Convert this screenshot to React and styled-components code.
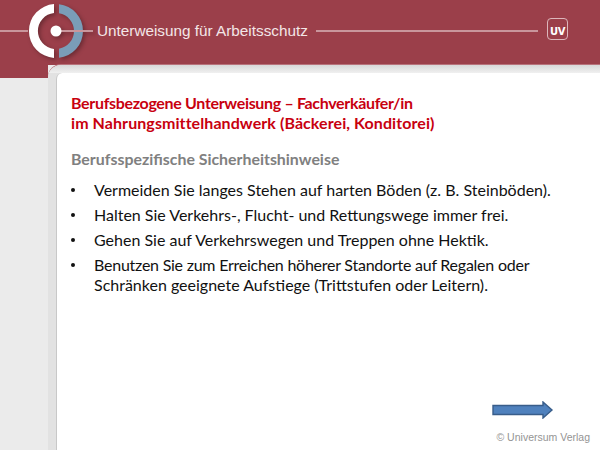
import React from 'react';
import styled, { createGlobalStyle } from 'styled-components';

const GlobalStyle = createGlobalStyle`
  html, body {
    margin: 0;
    padding: 0;
    width: 600px;
    height: 450px;
    overflow: hidden;
  }
`;

const Page = styled.div`
  width: 600px;
  height: 450px;
  display: flex;
  flex-direction: column;
  background: #ebebeb;
  font-family: Lato, "Open Sans", sans-serif;
`;

const Header = styled.header`
  height: 65px;
  flex: none;
  display: flex;
  align-items: flex-start;
  padding-top: 1px;
  box-sizing: border-box;
  background: #9b3f4a;
`;

const Rule = styled.div`
  height: 2px;
  margin-top: 29px;
  background: #c9969c;
  flex: ${props => props.$grow ? 1 : 'none'};
  width: ${props => props.$width || 'auto'};
`;

const HeaderTitle = styled.span`
  font-family: "Liberation Sans", Arial, sans-serif;
  font-size: 15.3px;
  line-height: 20px;
  margin: 20px 8px 0 4px;
  color: #f3e6e7;
  white-space: nowrap;
`;

const UvBadge = styled.div`
  width: 21px;
  height: 22px;
  margin: 17px 32px 0 9px;
  box-sizing: border-box;
  border: 1px solid #dcb6bb;
  border-radius: 4px;
  display: flex;
  align-items: flex-end;
  justify-content: center;
  font-family: "DejaVu Sans", "Liberation Sans", sans-serif;
  font-weight: 700;
  font-size: 10px;
  line-height: 14px;
  letter-spacing: -0.5px;
  color: #fff;
`;

const LogoSvg = styled.svg`
  flex: none;
  overflow: visible;
  filter: drop-shadow(2px 2px 2px rgba(0, 0, 0, 0.3));
`;

const Body = styled.div`
  flex: 1;
  display: flex;
  min-height: 0;
`;

const Sidebar = styled.div`
  width: 48px;
  flex: none;
`;

const SidebarCap = styled.div`
  height: 13px;
  background: #9b3f4a;
`;

const PanelFrame = styled.div`
  flex: 1;
  display: flex;
  box-sizing: border-box;
  padding: 8px 0 0 8px;
  background: linear-gradient(#d8d8d8, #f0f0f0 8px, #e2e2e2 8px);
  border-top-left-radius: 13px;
  box-shadow: 0 -1px 0 #b8727b;
`;

const Sheet = styled.main`
  flex: 1;
  position: relative;
  box-sizing: border-box;
  background: #fff;
  border-left: 1px solid #c8c8c8;
  border-top-left-radius: 6px;
  padding: 20px 14px 0 14px;
  color: #111;
`;

const Heading = styled.h1`
  margin: 0;
  font-size: 16px;
  line-height: 20px;
  font-weight: 700;
  color: #c8000f;
`;

const HeadingLine = styled.span`
  display: block;
  white-space: nowrap;
  letter-spacing: ${props => props.$spacing};
`;

const Subheading = styled.h2`
  margin: 16px 0 0;
  font-size: 15.9px;
  line-height: 20px;
  font-weight: 700;
  color: #808080;
`;

const List = styled.ul`
  list-style: none;
  margin: 11px 0 0;
  padding: 0;
`;

const Item = styled.li`
  position: relative;
  padding-left: 23px;
  margin-bottom: 5px;
  font-size: 16px;
  line-height: 20px;
  white-space: nowrap;

  &::before {
    content: '';
    position: absolute;
    left: 0;
    top: 8px;
    width: 4px;
    height: 4px;
    border-radius: 50%;
    background: #111;
  }
`;

const ItemLine = styled.span`
  display: block;
  letter-spacing: ${props => props.$spacing || 'normal'};
`;

const ArrowSlot = styled.div`
  position: absolute;
  left: 435px;
  top: 328px;
  line-height: 0;
`;

const Copyright = styled.div`
  position: absolute;
  right: 10px;
  bottom: 7px;
  font-family: "Liberation Sans", Arial, sans-serif;
  font-size: 10.5px;
  color: #949494;
`;

const Logo = () => (
  <LogoSvg width="65" height="60" viewBox="0 0 65 60">
    <path d="M26 3.07 A27 27 0 0 0 26 56.93 L26 47.9 A18 18 0 0 1 26 12.1 Z" fill="#fff" />
    <path d="M31 3.17 A27 27 0 0 1 31 56.83 L31 47.75 A18 18 0 0 0 31 12.25 Z" fill="#7a9db8" />
    <path d="M28 29 H65 V31 H28 Z" fill="#c9969c" />
    <circle cx="28" cy="30" r="5.5" fill="#fff" />
  </LogoSvg>
);

const Arrow = () => (
  <svg width="62" height="18" viewBox="0 0 62 18">
    <path d="M1 4.5 H51 V1 L60 9 L51 17 V13.5 H1 Z" fill="#4f81bd" stroke="#385d8a" strokeWidth="1.4" />
  </svg>
);

export default function App() {
  return (
    <Page>
      <GlobalStyle />
      <Header>
        <Rule $width="28px" />
        <Logo />
        <HeaderTitle>Unterweisung für Arbeitsschutz</HeaderTitle>
        <Rule $grow />
        <UvBadge>UV</UvBadge>
      </Header>
      <Body>
        <Sidebar>
          <SidebarCap />
        </Sidebar>
        <PanelFrame>
          <Sheet>
            <Heading>
              <HeadingLine $spacing="-0.33px">Berufsbezogene Unterweisung – Fachverkäufer/in</HeadingLine>
              <HeadingLine $spacing="0.08px">im Nahrungsmittelhandwerk (Bäckerei, Konditorei)</HeadingLine>
            </Heading>
            <Subheading>Berufsspezifische Sicherheitshinweise</Subheading>
            <List>
              <Item>Vermeiden Sie langes Stehen auf harten Böden (z. B. Steinböden).</Item>
              <Item>Halten Sie Verkehrs-, Flucht- und Rettungswege immer frei.</Item>
              <Item>Gehen Sie auf Verkehrswegen und Treppen ohne Hektik.</Item>
              <Item>
                <ItemLine $spacing="-0.24px">Benutzen Sie zum Erreichen höherer Standorte auf Regalen oder</ItemLine>
                <ItemLine>Schränken geeignete Aufstiege (Trittstufen oder Leitern).</ItemLine>
              </Item>
            </List>
            <ArrowSlot>
              <Arrow />
            </ArrowSlot>
            <Copyright>© Universum Verlag</Copyright>
          </Sheet>
        </PanelFrame>
      </Body>
    </Page>
  );
}
